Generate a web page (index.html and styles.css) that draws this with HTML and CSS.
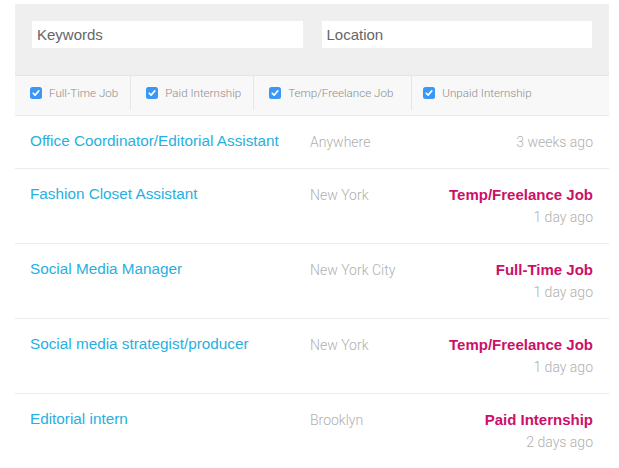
FILE: index.html
```html
<!DOCTYPE html>
<html>
<head>
<meta charset="utf-8">
<link rel="stylesheet" href="styles.css">
</head>
<body>
<div class="page">
  <div class="search">
    <div class="field"><input class="input" type="text" placeholder="Keywords"></div>
    <div class="field"><input class="input" type="text" placeholder="Location"></div>
  </div>
  <div class="filters">
    <label class="filter"><svg class="check" viewBox="0 0 12 12"><rect width="12" height="12" rx="2.5" fill="#3b97f5"/><path d="M3.2 6.2 L5.1 8.1 L8.8 3.9" fill="none" stroke="#fff" stroke-width="1.6" stroke-linecap="round" stroke-linejoin="round"/></svg><span>Full-Time Job</span></label>
    <label class="filter"><svg class="check" viewBox="0 0 12 12"><rect width="12" height="12" rx="2.5" fill="#3b97f5"/><path d="M3.2 6.2 L5.1 8.1 L8.8 3.9" fill="none" stroke="#fff" stroke-width="1.6" stroke-linecap="round" stroke-linejoin="round"/></svg><span>Paid Internship</span></label>
    <label class="filter wide"><svg class="check" viewBox="0 0 12 12"><rect width="12" height="12" rx="2.5" fill="#3b97f5"/><path d="M3.2 6.2 L5.1 8.1 L8.8 3.9" fill="none" stroke="#fff" stroke-width="1.6" stroke-linecap="round" stroke-linejoin="round"/></svg><span>Temp/Freelance Job</span></label>
    <label class="filter last"><svg class="check" viewBox="0 0 12 12"><rect width="12" height="12" rx="2.5" fill="#3b97f5"/><path d="M3.2 6.2 L5.1 8.1 L8.8 3.9" fill="none" stroke="#fff" stroke-width="1.6" stroke-linecap="round" stroke-linejoin="round"/></svg><span>Unpaid Internship</span></label>
  </div>
  <div class="jobs">
    <div class="job">
      <a class="title">Office Coordinator/Editorial Assistant</a>
      <div class="loc">Anywhere</div>
      <div class="meta"><div class="when">3 weeks ago</div></div>
    </div>
    <div class="job">
      <a class="title">Fashion Closet Assistant</a>
      <div class="loc">New York</div>
      <div class="meta"><div class="type">Temp/Freelance Job</div><div class="when">1 day ago</div></div>
    </div>
    <div class="job">
      <a class="title">Social Media Manager</a>
      <div class="loc">New York City</div>
      <div class="meta"><div class="type">Full-Time Job</div><div class="when">1 day ago</div></div>
    </div>
    <div class="job">
      <a class="title">Social media strategist/producer</a>
      <div class="loc">New York</div>
      <div class="meta"><div class="type">Temp/Freelance Job</div><div class="when">1 day ago</div></div>
    </div>
    <div class="job">
      <a class="title">Editorial intern</a>
      <div class="loc">Brooklyn</div>
      <div class="meta"><div class="type">Paid Internship</div><div class="when">2 days ago</div></div>
    </div>
  </div>
</div>
</body>
</html>
```
FILE: styles.css
```css
html, body {
  margin: 0;
  padding: 0;
  background: #fff;
}
body {
  font-family: "Liberation Sans", Arial, sans-serif;
}
.page {
  width: 594px;
  margin: 4px 0 0 15px;
}
.search {
  background: #efefef;
  display: flex;
  gap: 19px;
  padding: 17px 17px 27px 17px;
}
.field {
  flex: 1;
}
.input {
  box-sizing: border-box;
  width: 100%;
  height: 27px;
  border: none;
  background: #fff;
  padding: 0 5px;
  font-family: "Liberation Sans", Arial, sans-serif;
  font-size: 15px;
  color: #555;
  outline: none;
}
.input::placeholder {
  color: #666;
}
.filters {
  display: flex;
  box-sizing: border-box;
  height: 41px;
  padding-bottom: 5px;
  background: #f8f8f8;
  border-top: 1px solid #e6e6e6;
  border-bottom: 1px solid #e9e9e9;
}
.filter {
  display: flex;
  align-items: center;
  gap: 7px;
  padding: 0 12px 0 15px;
  border-right: 1px solid #e6e6e6;
  font-family: "Roboto", "Liberation Sans", sans-serif;
  font-weight: 300;
  font-size: 11.6px;
  color: #8c8c8c;
}
.filter.wide {
  padding-right: 18px;
}
.filter.last {
  border-right: none;
  padding-left: 11px;
}
.check {
  width: 12px;
  height: 12px;
  flex: none;
}
.job {
  display: grid;
  grid-template-columns: 280px 1fr auto;
  align-items: start;
  padding: 15px 16px 15px 15px;
  border-bottom: 1px solid #ebebeb;
}
.job:last-child {
  border-bottom: none;
}
.title {
  font-size: 15.3px;
  line-height: 20px;
  color: #27b0df;
}
.loc {
  font-family: "Roboto", "Liberation Sans", sans-serif;
  font-weight: 300;
  font-size: 14px;
  line-height: 22px;
  color: #b0b0b0;
}
.meta {
  text-align: right;
}
.type {
  font-weight: bold;
  font-size: 15px;
  line-height: 22px;
  color: #cc1068;
}
.when {
  font-family: "Roboto", "Liberation Sans", sans-serif;
  font-weight: 300;
  font-size: 14px;
  line-height: 22px;
  color: #b0b0b0;
}
```
